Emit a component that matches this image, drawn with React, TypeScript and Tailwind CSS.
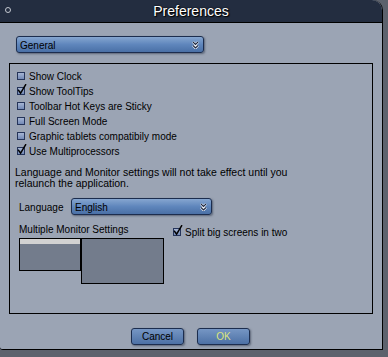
import React from "react";

const font = { fontFamily: '"Liberation Sans", Arial, sans-serif' };

function Box({ checked }: { checked?: boolean }) {
  return (
    <svg width="12" height="12" viewBox="0 0 12 12" className="shrink-0">
      <defs>
        <linearGradient id="cbg" x1="0" y1="0" x2="0" y2="1">
          <stop offset="0" stopColor="#a9b8d6" />
          <stop offset="1" stopColor="#6f86b4" />
        </linearGradient>
      </defs>
      <rect x="1.5" y="3.5" width="7" height="7" fill="url(#cbg)" stroke="#25345a" strokeWidth="1" />
      {checked && (
        <path d="M2.6 6.4 L4.6 9.2 L9.6 0.8" fill="none" stroke="#000" strokeWidth="1.5" strokeLinecap="square" />
      )}
    </svg>
  );
}

function Check({ label, checked }: { label: string; checked?: boolean }) {
  return (
    <div className="flex h-[15px] items-center gap-[1px]">
      <div className="-mt-[3px]">
        <Box checked={checked} />
      </div>
      <span className="text-[10px] leading-[12px] text-black">{label}</span>
    </div>
  );
}

function Chev() {
  return (
    <svg width="7" height="8" viewBox="0 0 7 8">
      <path d="M1 1 L3.5 3.5 L6 1 M1 4.5 L3.5 7 L6 4.5" fill="none" stroke="#ffffff" strokeWidth="2.4" />
      <path d="M1 1 L3.5 3.5 L6 1 M1 4.5 L3.5 7 L6 4.5" fill="none" stroke="#1b2640" strokeWidth="1.1" />
    </svg>
  );
}

function Select({ value, w }: { value: string; w: string }) {
  return (
    <div
      className={`${w} flex h-[17px] items-center justify-between rounded-[3px] border border-[#1c2d4e] bg-gradient-to-b from-[#86a6d0] via-[#5f86bc] to-[#4a70a6] pl-[3px] pr-[4px] shadow-[1px_1px_2px_rgba(30,40,60,0.5)]`}
    >
      <span className="pt-[3px] text-[10px] leading-[12px] text-black">{value}</span>
      <Chev />
    </div>
  );
}

function Button({ label, yellow }: { label: string; yellow?: boolean }) {
  return (
    <div
      className={`flex h-[17px] w-[53px] items-center justify-center rounded-[3px] border border-[#1c2d4e] bg-gradient-to-b from-[#7696c4] to-[#4d71a5] text-[10px] leading-[12px] shadow-[1px_1px_2px_rgba(30,40,60,0.5)] ${yellow ? "text-[#dbe47c]" : "text-black"}`}
    >
      {label}
    </div>
  );
}

export default function App() {
  return (
    <div className="h-[357px] w-[388px] overflow-hidden bg-[#5d626d]" style={font}>
      <div className="flex h-[350px] w-[383px] flex-col rounded-tr-[10px] rounded-bl-[3px] border-r border-b border-black bg-[#9ba4b4]">
        <div className="relative flex h-[23px] items-center justify-center rounded-tr-[10px] border-b border-black bg-[#232d40]">
          <div className="absolute left-[5px] top-[7px] h-[6px] w-[6px] rounded-full border-[1.5px] border-[#c4c8d0]" />
          <span
            className="text-[14px] leading-[16px] text-white"
            style={{ textShadow: "0 0 2px #000, 1px 1px 1px #000" }}
          >
            Preferences
          </span>
        </div>

        <div className="ml-[16px] mt-[13px]">
          <Select value="General" w="w-[188px]" />
        </div>

        <div className="ml-[9px] mt-[10px] h-[251px] w-[364px] border border-black pl-[6px] pt-[5px]">
          <Check label="Show Clock" />
          <Check label="Show ToolTips" checked />
          <Check label="Toolbar Hot Keys are Sticky" />
          <Check label="Full Screen Mode" />
          <Check label="Graphic tablets compatibily mode" />
          <Check label="Use Multiprocessors" checked />

          <p className="-ml-[1px] mt-[8px] text-[10.5px] leading-[11px] text-black">
            Language and Monitor settings will not take effect until you
            <br />
            relaunch the application.
          </p>

          <div className="ml-[3px] mt-[9px] flex items-center">
            <span className="w-[52px] pt-[3px] text-[10px] leading-[12px] text-black">Language</span>
            <Select value="English" w="w-[141px]" />
          </div>

          <div className="ml-[3px] mt-[9px] flex">
            <div className="flex flex-col">
              <span className="text-[10px] leading-[12px] text-black">Multiple Monitor Settings</span>
              <div className="mt-[2px] flex items-start">
                <div className="h-[33px] w-[62px] border border-black bg-[#737c8c]">
                  <div className="h-[5px] bg-[#d2d2d2]" />
                </div>
                <div className="h-[46px] w-[83px] border border-black bg-[#737c8c]" />
              </div>
            </div>
            <div className="ml-[8px] mt-[1px]">
              <Check label="Split big screens in two" checked />
            </div>
          </div>
        </div>

        <div className="mt-[14px] flex justify-center gap-[13px] pr-[1px]">
          <Button label="Cancel" />
          <Button label="OK" yellow />
        </div>
      </div>
    </div>
  );
}
